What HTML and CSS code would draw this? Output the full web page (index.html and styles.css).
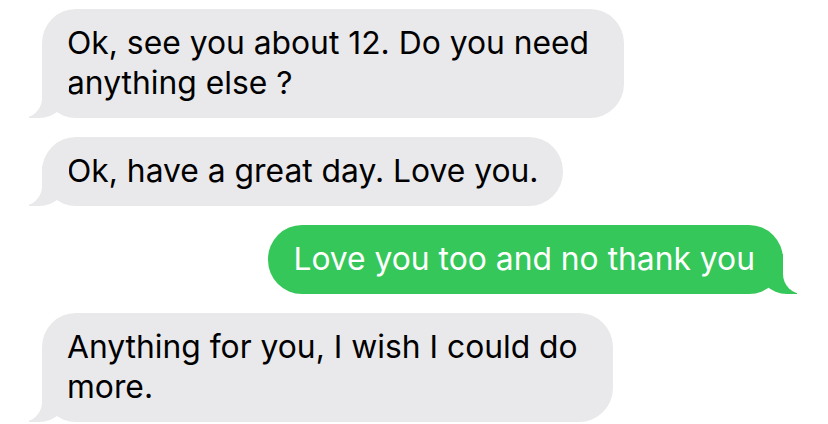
FILE: index.html
```html
<!DOCTYPE html>
<html lang="en">
<head>
<meta charset="utf-8">
<title>Messages</title>
<link rel="stylesheet" href="styles.css">
</head>
<body>
<main class="thread">
  <div class="bubble received wrapped">Ok, see you about 12. Do you need<br>anything else ?</div>
  <div class="bubble received">Ok, have a great day. Love you.</div>
  <div class="bubble sent">Love you too and no thank you</div>
  <div class="bubble received wrapped">Anything for you, I wish I could do<br>more.</div>
</main>
</body>
</html>
```
FILE: styles.css
```css
html, body {
  margin: 0;
  padding: 0;
  background: #ffffff;
}

body {
  width: 828px;
  height: 424px;
  overflow: hidden;
  font-family: Inter, "Liberation Sans", Arial, sans-serif;
}

.thread {
  display: flex;
  flex-direction: column;
  gap: 19px;
  padding: 9px 45px 0 42px;
}

.bubble {
  position: relative;
  width: fit-content;
  padding: 14px 25px 15px 25px;
  border-radius: 34px;
  font-size: 31.8px;
  line-height: 40px;
  color: #000000;
}

.bubble.wrapped {
  padding-right: 35px;
}

.received {
  align-self: flex-start;
  background: #e9e9eb;
}

.sent {
  align-self: flex-end;
  background: #35c759;
  color: #ffffff;
  padding-right: 28px;
}

.bubble::before,
.bubble::after {
  content: "";
  position: absolute;
  bottom: 0;
  height: 40px;
}

.received::before {
  left: -13px;
  width: 40px;
  background: #e9e9eb;
  border-bottom-right-radius: 30px;
}

.received::after {
  left: -20px;
  width: 20px;
  background: #ffffff;
  border-bottom-right-radius: 20px;
}

.sent::before {
  right: -14px;
  width: 40px;
  background: #35c759;
  border-bottom-left-radius: 30px;
}

.sent::after {
  right: -20px;
  width: 20px;
  background: #ffffff;
  border-bottom-left-radius: 20px;
}
```
